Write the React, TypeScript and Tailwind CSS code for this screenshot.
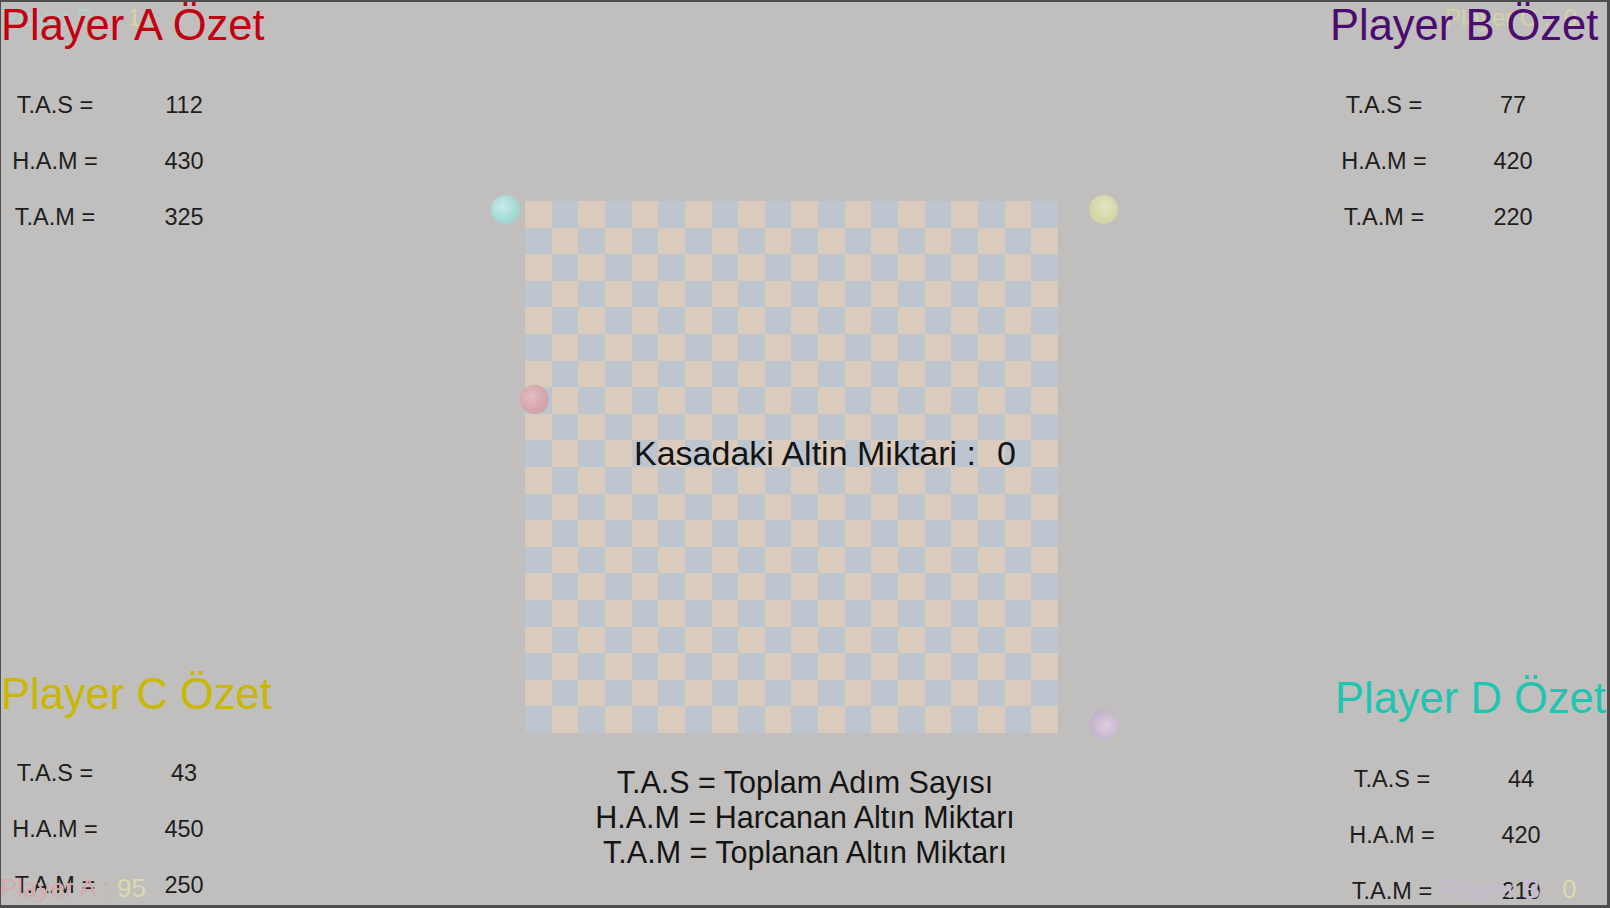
import React from "react";

type Row = { label: string; value: string };

function Panel({
  title,
  color,
  rows,
  titleMt,
  rowsMt,
  labelW,
  valueMl,
  labelMl,
}: {
  title: string;
  color: string;
  rows: Row[];
  titleMt: string;
  rowsMt: string;
  labelW: string;
  valueMl: string;
  labelMl: string;
}) {
  return (
    <div className={`flex flex-col ${titleMt}`}>
      <div className={`relative z-10 text-[43.5px] leading-[44px] h-[44px] whitespace-nowrap ${color}`}>{title}</div>
      <div className={`flex flex-col gap-[33px] ${rowsMt}`}>
        {rows.map((r) => (
          <div key={r.label} className="flex text-[23.5px] leading-[23px] h-[23px] text-[#1e1e1e]">
            <div className={`${labelW} ${labelMl} text-center whitespace-nowrap`}>{r.label}</div>
            <div className={`w-[100px] ${valueMl} text-center`}>{r.value}</div>
          </div>
        ))}
      </div>
    </div>
  );
}

function Board() {
  const cells = [];
  for (let r = 0; r < 20; r++) {
    for (let c = 0; c < 20; c++) {
      cells.push(
        <div
          key={`${r}-${c}`}
          className={(r + c) % 2 === 0 ? "bg-[#dacbbd]" : "bg-[#bdc5cf]"}
        />
      );
    }
  }
  return (
    <div className="relative w-[533px] h-[532px] shrink-0">
      <div className="grid grid-cols-20 grid-rows-20 w-full h-full">{cells}</div>
      <div className="absolute left-[109px] top-[235px] flex text-[34px] leading-none whitespace-pre text-[#141414]">
        <span>Kasadaki Altin Miktari :</span>
        <span className="ml-[21px]">0</span>
      </div>
    </div>
  );
}

function Ball({ cls }: { cls: string }) {
  return <div className={`absolute w-[29px] h-[29px] rounded-full ${cls}`} />;
}

export default function App() {
  return (
    <div className="w-[1610px] h-[908px] box-border border-t-2 border-l border-r-[3px] border-b-[3px] border-[#4e4e4e] bg-[#c0bfbd] font-['Liberation_Sans',Arial,sans-serif] relative overflow-hidden flex">
      {/* faint score labels (behind titles) */}
      <div className="absolute left-[1px] top-[4px] text-[24px] leading-none whitespace-pre">
        <span className="text-[#a9d3cf]">{"Player D :   "}</span>
        <span className="text-[#d6d4a6]">1</span>
      </div>
      <div className="absolute left-[1444px] top-[4px] text-[24px] leading-none whitespace-pre">
        <span className="text-[#d4d2a6]">{"Player C :  "}</span>
        <span className="text-[#d6d4a6]">0</span>
      </div>
      <div className="absolute left-[-1px] top-[873px] text-[26px] leading-none whitespace-pre">
        <span className="text-[#d4aaad]">{"Player A : "}</span>
        <span className="text-[#dcdbab]">95</span>
      </div>
      <div className="absolute left-[1441px] top-[874px] text-[26px] leading-none whitespace-pre">
        <span className="text-[#c9b9d2]">{"Player B : "}</span>
        <span className="text-[#dcdbab]">0</span>
      </div>

      {/* left column */}
      <div className="w-[524px] shrink-0 flex flex-col">
        <Panel
          title="Player A Özet"
          color="text-[#c30010]"
          titleMt="mt-[1px]"
          rowsMt="mt-[46.5px]"
          labelW="w-[108px]"
          labelMl="ml-0"
          valueMl="ml-[25px]"
          rows={[
            { label: "T.A.S =", value: "112" },
            { label: "H.A.M =", value: "430" },
            { label: "T.A.M =", value: "325" },
          ]}
        />
        <Panel
          title="Player C Özet"
          color="text-[#c9b700]"
          titleMt="mt-[443px]"
          rowsMt="mt-[46px]"
          labelW="w-[108px]"
          labelMl="ml-0"
          valueMl="ml-[25px]"
          rows={[
            { label: "T.A.S =", value: "43" },
            { label: "H.A.M =", value: "450" },
            { label: "T.A.M =", value: "250" },
          ]}
        />
      </div>

      {/* center column */}
      <div className="w-[533px] shrink-0 flex flex-col pt-[199px]">
        <Board />
        <div className="mt-[32px] pl-[27px] text-center text-[30.5px] leading-[35px] text-[#141414] whitespace-nowrap">
          <div>T.A.S = Toplam Adım Sayısı</div>
          <div>H.A.M = Harcanan Altın Miktarı</div>
          <div>T.A.M = Toplanan Altın Miktarı</div>
        </div>
      </div>

      {/* right column */}
      <div className="flex-1 min-w-0 flex flex-col">
        <div className="pl-[272px]">
          <Panel
            title="Player B Özet"
            color="text-[#4b0b70]"
            titleMt="mt-[1px]"
            rowsMt="mt-[46.5px]"
            labelW="w-[112px]"
            labelMl="-ml-[2px]"
            valueMl="ml-[23px]"
            rows={[
              { label: "T.A.S =", value: "77" },
              { label: "H.A.M =", value: "420" },
              { label: "T.A.M =", value: "220" },
            ]}
          />
        </div>
        <div className="pl-[277px]">
          <Panel
            title="Player D Özet"
            color="text-[#1ec6b1]"
            titleMt="mt-[447px]"
            rowsMt="mt-[48.5px]"
            labelW="w-[112px]"
            labelMl="ml-[1px]"
            valueMl="ml-[23px]"
            rows={[
              { label: "T.A.S =", value: "44" },
              { label: "H.A.M =", value: "420" },
              { label: "T.A.M =", value: "210" },
            ]}
          />
        </div>
      </div>

      {/* balls */}
      <Ball cls="left-[490px] top-[193px] bg-[radial-gradient(circle_at_40%_40%,#c9ecea,#a4d9d5_55%,#98cdc9)]" />
      <Ball cls="left-[1088px] top-[193px] bg-[radial-gradient(circle_at_55%_40%,#e4e4c4,#d6d6a8_55%,#cccc9e)]" />
      <Ball cls="left-[519px] top-[383px] bg-[radial-gradient(circle_at_40%_40%,#e2bcc0,#d5a6ab_55%,#cb9ca1)]" />
      <Ball cls="left-[1088px] top-[708px] bg-[radial-gradient(circle_at_60%_55%,#decfe0,#c8b6ce_55%,#bcaac4)]" />
    </div>
  );
}
